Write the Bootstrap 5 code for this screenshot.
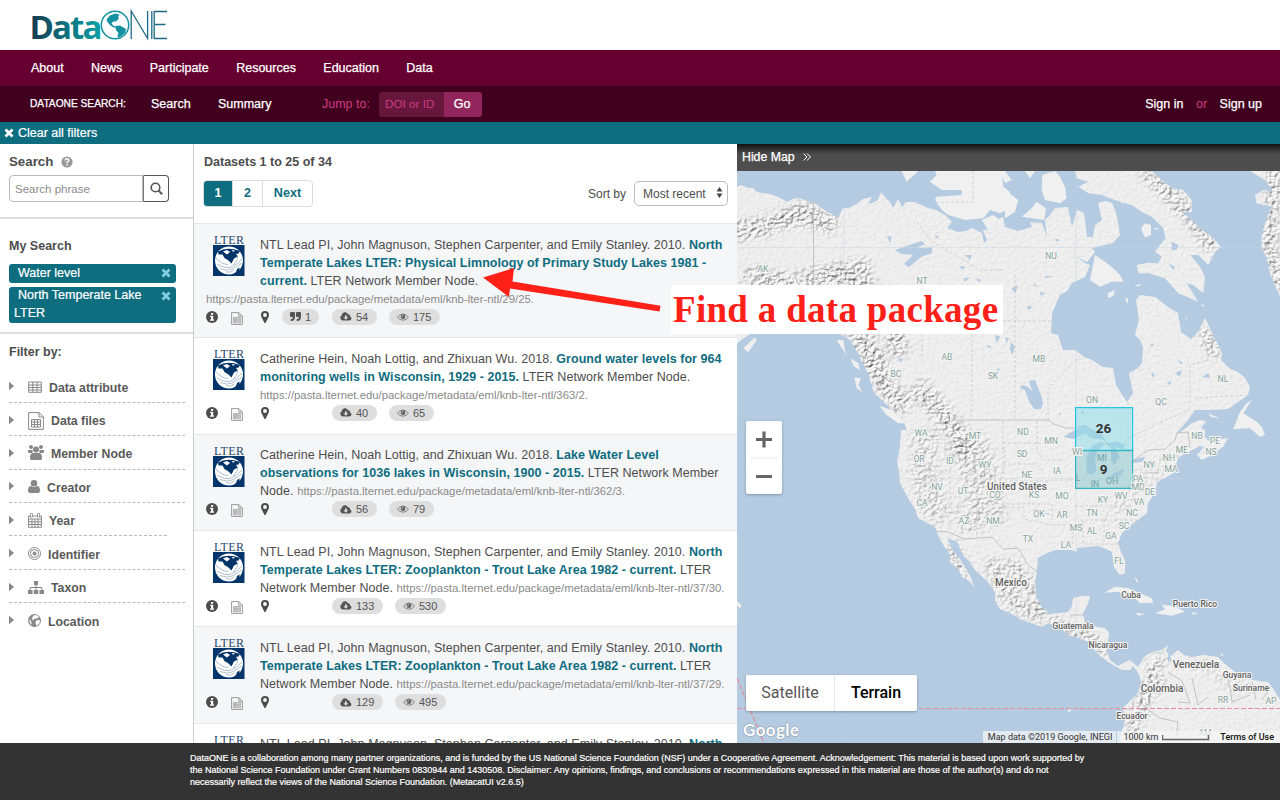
<!DOCTYPE html>
<html lang="en">
<head>
<meta charset="utf-8">
<meta name="viewport" content="width=device-width, initial-scale=1">
<title>DataONE Search</title>
<link href="https://cdn.jsdelivr.net/npm/bootstrap@5.3.0/dist/css/bootstrap.min.css" rel="stylesheet">
<style>
body{font-family:"Liberation Sans",Arial,sans-serif;font-size:12.5px;line-height:18px;color:#4d4d4d;height:800px;overflow:hidden;background:#fff}
a{text-decoration:none;color:inherit}
.site-head{height:50px;flex:none}
.bar-main{height:36px;background:#660030;color:#fff;padding:0 0 1px 31px;gap:27.4px;flex:none}
.bar-sub{height:36px;background:#40001e;color:#fff;padding:0 18px 0 30px;flex:none}
.bar-main,.bar-sub{font-size:12.5px;-webkit-text-stroke:.25px currentColor}
.bar-clear{height:22px;background:#0f6d80;color:#fff;padding-left:4px;flex:none;font-size:12.5px;-webkit-text-stroke:.2px #fff}
.pink{color:#d33b85;-webkit-text-stroke:0}
.doi{width:65px;height:25px;background:#66173b;border-radius:3px 0 0 3px;padding-left:6px;font-size:11.7px;line-height:24px}
.go{width:38px;height:25px;background:#91265d;border-radius:0 3px 3px 0;text-align:center;line-height:24px;padding-right:2px}
.main-area{height:599px;flex:none}
.side{width:194px;border-right:1.5px solid #ccc;flex:none}
.side h2,.res h2{font-size:12.5px;line-height:18px;font-weight:700;margin:0}
.side-sec{padding-left:9px;border-bottom:2px solid #ddd}
.phrase{width:134px;height:27px;border:1px solid #bbb;border-radius:4px 0 0 4px;font-size:11.5px;color:#8b8b8b;padding-left:5px;line-height:26px}
.lens{width:26px;height:27px;border:1px solid #555;border-left:1px solid #777;border-radius:0 4px 4px 0}
.pick{width:167px;background:#0f6d80;color:#fff;border-radius:3px;padding:0 2px 0 5px;font-size:12.5px;-webkit-text-stroke:.2px #fff}
.filt{width:176px;height:33.4px;border-bottom:1px dashed #bbb;font-weight:700;color:#5a5a5a;padding-top:4px;font-size:12.3px}
.filt>svg:first-child{margin-top:-3px}
.filt.end{border:0}
.res{width:543px;flex:none;overflow:hidden}
.pg{height:27px;border:1px solid #ddd;border-radius:4px;font-weight:700;color:#0f6d80;overflow:hidden;font-size:12.6px;line-height:25px;text-align:center;margin-left:-1px}
.pg span{border-right:1px solid #ddd;height:27px}
.sortbox{width:94px;height:25px;border:1px solid #bbb;border-radius:5px;font-size:12px;padding:0 4px 0 8px}
.item{height:96.4px;border-top:1px solid #e7e7e7;position:relative;padding-top:11.6px}
.item.odd{background:#f5f6f8}
.cite{padding-left:66px;white-space:nowrap;letter-spacing:.05px}
.cite div{height:18px}
.cite b{color:#0f6d80}
.url{color:#8a8a8a;font-size:11.35px;letter-spacing:0}
.lt{left:19px;top:11px}
.icons{height:19px;padding-left:12px;margin-top:-.3px}
.pill{height:16px;border-radius:8px;background:#dedede;font-size:11px;line-height:16px;color:#555;padding:0 8px;letter-spacing:0}
.map{width:543px;background:#b4cbe2;flex:none}
.hide-bar{height:27px;background:linear-gradient(#111,#4d4d4d 10px);color:#fff;padding:0 0 2px 5px;font-size:12.3px;-webkit-text-stroke:.25px #fff}
.zoomer{left:9px;top:277px;width:36px;height:73px;background:#fff;border-radius:2px;box-shadow:0 1px 3px #0004}
.maptype{left:9px;top:531px;width:171px;height:36px;background:#fff;border-radius:2px;box-shadow:0 1px 3px #0004;font:16px/36px Roboto,sans-serif;color:#565656}
.attr{right:0;bottom:0;height:12px;font:9px/12px Roboto,sans-serif;color:#333}
.attr span{background:#f5f5f5b8;height:12px}
.foot{height:57px;background:#333;color:#fff;font-size:9px;line-height:12px;padding:9px 0 0 190px;white-space:nowrap;flex:none;-webkit-text-stroke:.2px #fff}
.callout{left:671px;top:285px;width:332px;height:49px;background:#fff;color:#ff2018;font:700 37px/49px "Liberation Serif",serif;padding-left:2px;white-space:nowrap;letter-spacing:.3px}
svg{display:block;flex:none}
.st{font:8.6px Roboto,sans-serif;fill:#86a39b;stroke:#f4f4f4;stroke-width:2.2px;paint-order:stroke;text-anchor:middle}
.ct{font:500 8.5px Roboto,sans-serif;fill:#606060;stroke:#f4f4f4;stroke-width:2px;paint-order:stroke;text-anchor:middle}
.ct .big{font-size:10px}
</style>
</head>
<body class="d-flex flex-column">
<svg width="0" height="0" class="position-absolute">
<defs>
<symbol id="x" viewBox="0 0 10 10"><path d="M1.500 1.500l7 7M8.500 1.500l-7 7" stroke="currentColor" stroke-width="2.800"/></symbol>
<symbol id="info" viewBox="0 0 12 12"><circle cx="6" cy="6" r="6" fill="#4d4d4d"/><path d="M5 2h2.200v1.700H5zM4.200 4.800h3v3.600h.9v1.300H4.100V8.400h.9V6h-.8z" fill="#fff"/></symbol>
<symbol id="sheet" viewBox="0 0 12 13"><path d="M.6.6h7.200l3.600 3.600v8.200H.6zM7.800.6v3.600h3.600" fill="none" stroke="#999"/><path d="M2.500 5.500h7v5.300h-7z" fill="#d5d5d5"/><path d="M2.500 5.500h7v5.300h-7zM2.500 7.300h7M2.500 9h7M4.800 5.500v5.300" fill="none" stroke="#aaa" stroke-width=".8"/></symbol>
<symbol id="pin" viewBox="0 0 8 12"><path d="M4 0a4 4 0 0 1 4 4c0 1.500-.6 2.300-1.200 3.500L4.500 12h-1L1.200 7.500C.6 6.300 0 5.500 0 4a4 4 0 0 1 4-4zm0 2.100A1.900 1.900 0 1 0 4 5.900 1.900 1.900 0 0 0 4 2.100z" fill="#4d4d4d" fill-rule="evenodd"/></symbol>
<symbol id="quote" viewBox="0 0 11 9"><path d="M0 1q0-1 1-1h3q1 0 1 1v3.500Q5 9 1 9H.6V7.300H1Q2.700 7.300 2.900 5H1Q0 5 0 4zM6 1q0-1 1-1h3q1 0 1 1v3.500Q11 9 7 9h-.4V7.300H7q1.700 0 1.900-2.300H7Q6 5 6 4z" fill="#555"/></symbol>
<symbol id="cloud" viewBox="0 0 12 9"><path d="M3 8.500A2.800 2.800 0 0 1 1.700 3.300 3.300 3.300 0 0 1 8 2.200a1.900 1.900 0 0 1 2 2.200 2.100 2.100 0 0 1-.7 4.100z" fill="#555"/><path d="M5 3.300h1.700v2h1.500L5.850 7.700 3.500 5.300H5z" fill="#dedede"/></symbol>
<symbol id="eye" viewBox="0 0 12 8"><path d="M.6 4.200Q2.800 1 6 1t5.400 3.200Q9.200 7.200 6 7.200T.6 4.200z" fill="none" stroke="#777" stroke-width=".9"/><circle cx="6" cy="3.700" r="2.400" fill="#666"/><path d="M4.800 3.600Q5 2.500 6 2.400" stroke="#ddd" stroke-width=".6" fill="none"/></symbol>
<symbol id="lter" viewBox="0 0 32 41"><text x="16" y="9.300" text-anchor="middle" textLength="30" font-family="Liberation Serif,serif" font-size="12" fill="#28476d">LTER</text><path d="M0 10h31.500v31H0z" fill="#04356a"/><circle cx="16" cy="25.500" r="14" fill="#fff"/><path d="M5 16.500Q14 11.500 27 16L25.500 18.500 23 19 25 21.500 21 23.500 18.500 28.500 15.500 25.500 11.500 23 9.500 19.500 5.500 19.500Z" fill="#04356a"/><path d="M10 16.500l4-1.500 3 2-3 2.500zM19 15l3 .5-2 1.500z" fill="#fff"/><path d="M3 23q6 6.500 12 6.500M4 29q8 5 14 3T29 24M7 33.500q7 3 12 .5T29 28M24 21q2 4-4 9M13 37q5 1 8-2" fill="none" stroke="#8ca3bd" stroke-width=".7"/><path d="M26.500 32.500l-2.500 1.500-1 3-4.500 3.500 8-3z" fill="#04356a"/></symbol>
<symbol id="tri" viewBox="0 0 6 10"><path d="M0 0l6 5-6 5z" fill="#888"/></symbol>
</defs></svg>

<header class="site-head">
<svg width="200" height="50" viewBox="0 0 200 50" role="img" aria-label="DataONE">
<defs><linearGradient id="lg" x1="30" x2="104" y1="0" y2="0" gradientUnits="userSpaceOnUse"><stop stop-color="#17394e"/><stop offset=".5" stop-color="#0b7280"/><stop offset="1" stop-color="#0aa3a6"/></linearGradient></defs>
<text x="29.500" y="39.300" letter-spacing="-1.900" font-family="Open Sans,sans-serif" font-weight="700" font-size="33" fill="url(#lg)">Data</text>
<circle cx="115" cy="25" r="13.700" fill="#fff" stroke="#1391a0" stroke-width="1.500"/>
<path d="M106.500 19.500l3.500-4 5-2 4.500 1-1.500 2.500 1 1.500-3 3-2.500 0-2 1.500 1.500 2.500 2.500 1 .5 1.500-3.500-1-3-2.500-2-2.500zM115.500 26l4.500-.5 6 3.500-1 4-3.500 3-3.500 1.500-.5-2 1-2.500-2.500-3z" fill="#1391a0"/>
<path d="M131.200 39V11L147.600 38.500V11M151.800 11V39M154.200 11V39M154.200 11.500H167M155 24.500H165.500M154.200 38.500H167" fill="none" stroke="#1d6a86" stroke-width="1.300"/>
</svg>
</header>
<nav class="bar-main d-flex align-items-center"><a href="#">About</a><a href="#">News</a><a href="#">Participate</a><a href="#">Resources</a><a href="#">Education</a><a href="#">Data</a></nav>
<nav class="bar-sub d-flex align-items-center">
<span style="width:121px;font-size:10.200px">DATAONE SEARCH:</span><a href="#" style="width:67px">Search</a><a href="#" style="width:104px">Summary</a>
<span class="pink" style="width:57px">Jump to:</span><span class="doi pink">DOI or ID</span><span class="go">Go</span>
<a href="#" class="ms-auto">Sign in</a><span class="pink" style="margin:0 12.500px">or</span><a href="#">Sign up</a>
</nav>
<div class="bar-clear d-flex align-items-center"><svg width="10" height="10" class="me-1"><use href="#x"/></svg>Clear all filters</div>

<main class="main-area d-flex">
<aside class="side">
<section class="side-sec" style="height:74.500px;padding-top:9px">
<h2 class="d-flex align-items-center" style="font-size:13.300px">Search<svg class="ms-2" width="12" height="12" viewBox="0 0 12 12"><circle cx="6" cy="6" r="5.600" fill="#999"/><path d="M4.100 4.500Q4.200 2.800 6 2.800t1.900 1.600Q7.900 5.300 6 6.200V7M6 8v1.500" fill="none" stroke="#fff" stroke-width="1.500"/></svg></h2>
<div class="d-flex" style="margin-top:4px"><div class="phrase">Search phrase</div><div class="lens d-flex align-items-center justify-content-center"><svg width="13" height="13" viewBox="0 0 13 13"><circle cx="5.500" cy="5.500" r="4.300" fill="none" stroke="#555" stroke-width="1.600"/><path d="M8.600 8.600l3.600 3.600" stroke="#555" stroke-width="2"/></svg></div></div>
</section>
<section class="side-sec" style="height:115px;padding-top:18px">
<h2>My Search</h2>
<div class="pick d-flex align-items-center justify-content-between" style="height:19px;margin-top:9.500px;padding-bottom:2px"><span class="ps-1">Water level</span><svg width="10" height="10" style="color:#83cfdf;margin-right:3px"><use href="#x"/></svg></div>
<div class="pick d-flex justify-content-between" style="height:36px;margin-top:4px;line-height:17.500px"><span style="text-indent:4px">North Temperate Lake<br>LTER</span><svg width="10" height="10" style="color:#83cfdf;margin:4px 3px 0 0"><use href="#x"/></svg></div>
</section>
<section style="padding:9px 0 0 9px">
<h2>Filter by:</h2>
<div style="height:9px"></div>
<div class="filt d-flex align-items-center"><svg width="5" height="10"><use href="#tri"/></svg><svg style="margin:0 7px 2px 14px" width="14" height="12" viewBox="0 0 14 12"><path d="M.7 1h12.600v10.300H.7zM.7 4h12.600M.7 6.500h12.600M.7 9h12.600M4.800 1v10M9 1v10" fill="none" stroke="#888"/></svg>Data attribute</div>
<div class="filt d-flex align-items-center"><svg width="5" height="10"><use href="#tri"/></svg><svg style="margin:0 7px 0 14px" width="16" height="18" viewBox="0 0 16 18"><path d="M.6.600h10.400l4.400 4.400v12.400H.6zM11 .6v4.400h4.400M3.500 7.500h9v7.500h-9zM3.500 10h9M3.500 12.500h9M6.500 7.500v7.500M9.500 7.500v7.500" fill="none" stroke="#888"/></svg>Data files</div>
<div class="filt d-flex align-items-center"><svg width="5" height="10"><use href="#tri"/></svg><svg style="margin:0 7px 4px 14px" width="16" height="15" viewBox="0 0 16 15" fill="#888"><circle cx="8" cy="4.500" r="3"/><circle cx="3" cy="2" r="2"/><circle cx="13" cy="2" r="2"/><path d="M3 15q-1-.5-1-2 0-5 3-5h6q3 0 3 5 0 1.500-1 2zM0 5h4.500v3H1Q0 8 0 6zM16 5h-4.500v3H15q1 0 1-2z"/></svg>Member Node</div>
<div class="filt d-flex align-items-center"><svg width="5" height="10"><use href="#tri"/></svg><svg style="margin:0 7px 2px 14px" width="12" height="13" viewBox="0 0 12 13" fill="#888"><circle cx="6" cy="3.300" r="3.300"/><path d="M1.500 13Q0 12.500 0 10.500 0 6 3 6q3 2 6 0 3 0 3 4.500 0 2-1.500 2.500z"/></svg>Creator</div>
<div class="filt d-flex align-items-center" style="width:158px"><svg width="5" height="10"><use href="#tri"/></svg><svg style="margin:0 7px 2px 14px" width="14" height="15" viewBox="0 0 14 15"><path d="M.6 3h12.800v11.300H.6zM.6 6h12.800M.6 8.800h12.800M.6 11.500h12.800M4 6v8M7 6v8M10 6v8" fill="none" stroke="#888"/><path d="M2.500 .5h2v3.500h-2zM9.500 .5h2v3.500h-2z" fill="#fff" stroke="#888" stroke-width=".8"/></svg>Year</div>
<div class="filt d-flex align-items-center"><svg width="5" height="10"><use href="#tri"/></svg><svg style="margin:0 7px 2px 14px" width="13" height="13" viewBox="0 0 13 13" fill="none" stroke="#888"><circle cx="6.500" cy="6.500" r="6"/><circle cx="6.500" cy="6.500" r="4"/><circle cx="6.500" cy="6.500" r="1.600" fill="#888"/></svg>Identifier</div>
<div class="filt d-flex align-items-center"><svg width="5" height="10"><use href="#tri"/></svg><svg style="margin:0 7px 2px 14px" width="16" height="13" viewBox="0 0 16 13"><path d="M6 0h4v4H6zM0 9h4.500v4H0zM5.700 9h4.500v4H5.700zM11.500 9H16v4h-4.500z" fill="#888"/><path d="M8 4v5M2.200 9V6.500h11.600V9" fill="none" stroke="#888"/></svg>Taxon</div>
<div class="filt end d-flex align-items-center"><svg width="5" height="10"><use href="#tri"/></svg><svg style="margin:0 7px 2px 14px" width="13" height="13" viewBox="0 0 13 13"><circle cx="6.500" cy="6.500" r="6.500" fill="#888"/><path d="M5.500 1.500l3-.5 2.500 2-2 1.500-2.500 0-1 1.500-2-1zM8 6.500l4-.5-.5 3.500-3 2.500-1-3zM1 5l2 2 1 4-2-2z" fill="#fff"/></svg>Location</div>
</section>
</aside>

<section class="res">
<div style="height:79px;padding:9px 9px 0 10px">
<h2>Datasets 1 to 25 of 34</h2>
<div class="d-flex align-items-center" style="margin-top:9px">
<div class="pg d-flex"><span style="width:29px;background:#0f6d80;color:#fff">1</span><span style="width:30px">2</span><span class="border-0" style="width:49px">Next</span></div>
<span class="ms-auto" style="font-size:12px;margin-right:8px">Sort by</span><div class="sortbox d-flex align-items-center justify-content-between">Most recent<svg width="7" height="11" viewBox="0 0 7 11" style="margin-bottom:3px"><path d="M3.500 0L6.500 4.500H.5zM3.500 11L.5 6.500h6z" fill="#444"/></svg></div>
</div></div>

<article class="item odd" style="height:114.200px"><svg class="lt position-absolute" width="32" height="41"><use href="#lter"/></svg>
<div class="cite"><div>NTL Lead PI, John Magnuson, Stephen Carpenter, and Emily Stanley. 2010. <b>North</b></div><div><b>Temperate Lakes LTER: Physical Limnology of Primary Study Lakes 1981 -</b></div><div><b>current.</b> LTER Network Member Node.</div><div class="url" style="margin-left:-54px">https://pasta.lternet.edu/package/metadata/eml/knb-lter-ntl/29/25.</div></div>
<div class="icons d-flex align-items-center"><svg width="12" height="12"><use href="#info"/></svg><svg style="margin:3px 0 0 13px" width="12" height="13"><use href="#sheet"/></svg><svg style="margin:0 13px 0 18px" width="8" height="12"><use href="#pin"/></svg>
<span class="pill d-flex align-items-center" style="width:37px"><svg width="11" height="9" class="me-1"><use href="#quote"/></svg>1</span><span class="pill d-flex align-items-center" style="width:45px;margin-left:13px"><svg width="12" height="9" class="me-1"><use href="#cloud"/></svg>54</span><span class="pill d-flex align-items-center" style="width:51px;margin-left:12px"><svg width="12" height="8" class="me-1"><use href="#eye"/></svg>175</span></div></article>

<article class="item"><svg class="lt position-absolute" width="32" height="41"><use href="#lter"/></svg>
<div class="cite"><div>Catherine Hein, Noah Lottig, and Zhixuan Wu. 2018. <b>Ground water levels for 964</b></div><div><b>monitoring wells in Wisconsin, 1929 - 2015.</b> LTER Network Member Node.</div><div class="url">https://pasta.lternet.edu/package/metadata/eml/knb-lter-ntl/363/2.</div></div>
<div class="icons d-flex align-items-center"><svg width="12" height="12"><use href="#info"/></svg><svg style="margin:3px 0 0 13px" width="12" height="13"><use href="#sheet"/></svg><svg style="margin:0 63px 0 18px" width="8" height="12"><use href="#pin"/></svg>
<span class="pill d-flex align-items-center" style="width:45px"><svg width="12" height="9" class="me-1"><use href="#cloud"/></svg>40</span><span class="pill d-flex align-items-center" style="width:45px;margin-left:12px"><svg width="12" height="8" class="me-1"><use href="#eye"/></svg>65</span></div></article>

<article class="item odd"><svg class="lt position-absolute" width="32" height="41"><use href="#lter"/></svg>
<div class="cite"><div>Catherine Hein, Noah Lottig, and Zhixuan Wu. 2018. <b>Lake Water Level</b></div><div><b>observations for 1036 lakes in Wisconsin, 1900 - 2015.</b> LTER Network Member</div><div>Node. <span class="url">https://pasta.lternet.edu/package/metadata/eml/knb-lter-ntl/362/3.</span></div></div>
<div class="icons d-flex align-items-center"><svg width="12" height="12"><use href="#info"/></svg><svg style="margin:3px 0 0 13px" width="12" height="13"><use href="#sheet"/></svg><svg style="margin:0 63px 0 18px" width="8" height="12"><use href="#pin"/></svg>
<span class="pill d-flex align-items-center" style="width:45px"><svg width="12" height="9" class="me-1"><use href="#cloud"/></svg>56</span><span class="pill d-flex align-items-center" style="width:45px;margin-left:12px"><svg width="12" height="8" class="me-1"><use href="#eye"/></svg>79</span></div></article>

<article class="item"><svg class="lt position-absolute" width="32" height="41"><use href="#lter"/></svg>
<div class="cite"><div>NTL Lead PI, John Magnuson, Stephen Carpenter, and Emily Stanley. 2010. <b>North</b></div><div><b>Temperate Lakes LTER: Zooplankton - Trout Lake Area 1982 - current.</b> LTER</div><div>Network Member Node. <span class="url">https://pasta.lternet.edu/package/metadata/eml/knb-lter-ntl/37/30.</span></div></div>
<div class="icons d-flex align-items-center"><svg width="12" height="12"><use href="#info"/></svg><svg style="margin:3px 0 0 13px" width="12" height="13"><use href="#sheet"/></svg><svg style="margin:0 63px 0 18px" width="8" height="12"><use href="#pin"/></svg>
<span class="pill d-flex align-items-center" style="width:51px"><svg width="12" height="9" class="me-1"><use href="#cloud"/></svg>133</span><span class="pill d-flex align-items-center" style="width:51px;margin-left:12px"><svg width="12" height="8" class="me-1"><use href="#eye"/></svg>530</span></div></article>

<article class="item odd"><svg class="lt position-absolute" width="32" height="41"><use href="#lter"/></svg>
<div class="cite"><div>NTL Lead PI, John Magnuson, Stephen Carpenter, and Emily Stanley. 2010. <b>North</b></div><div><b>Temperate Lakes LTER: Zooplankton - Trout Lake Area 1982 - current.</b> LTER</div><div>Network Member Node. <span class="url">https://pasta.lternet.edu/package/metadata/eml/knb-lter-ntl/37/29.</span></div></div>
<div class="icons d-flex align-items-center"><svg width="12" height="12"><use href="#info"/></svg><svg style="margin:3px 0 0 13px" width="12" height="13"><use href="#sheet"/></svg><svg style="margin:0 63px 0 18px" width="8" height="12"><use href="#pin"/></svg>
<span class="pill d-flex align-items-center" style="width:51px"><svg width="12" height="9" class="me-1"><use href="#cloud"/></svg>129</span><span class="pill d-flex align-items-center" style="width:51px;margin-left:12px"><svg width="12" height="8" class="me-1"><use href="#eye"/></svg>495</span></div></article>

<article class="item"><svg class="lt position-absolute" width="32" height="41"><use href="#lter"/></svg>
<div class="cite"><div>NTL Lead PI, John Magnuson, Stephen Carpenter, and Emily Stanley. 2010. <b>North</b></div></div></article>
</section>

<section class="map position-relative">
<div class="hide-bar d-flex align-items-center">Hide Map<svg class="ms-2" width="8" height="8" viewBox="0 0 8 8"><path d="M.5.500L4 4 .5 7.500M4 .5L7.500 4 4 7.500" fill="none" stroke="#fff"/></svg></div>
<svg width="543" height="572" viewBox="737 171 543 572">
<defs>
<filter id="relief" x="0" y="0" width="100%" height="100%" color-interpolation-filters="sRGB"><feTurbulence type="fractalNoise" baseFrequency=".24 .3" numOctaves="3" seed="7"/><feDiffuseLighting surfaceScale="3.600" lighting-color="#fff"><feDistantLight azimuth="225" elevation="62"/></feDiffuseLighting><feColorMatrix type="matrix" values="1.050 0 0 0 0  1.050 0 0 0 0  1.050 0 0 0 0  0 0 0 0 1"/></filter>
<filter id="soft"><feGaussianBlur stdDeviation="5"/></filter>
<clipPath id="landclip"><use href="#mainland"/><use href="#baffin" transform="translate(1005 140) scale(.33333)"/><use href="#green" transform="translate(1005 140) scale(.33333)"/></clipPath>
<mask id="ranges" mask-type="alpha" style="mask-type:alpha" maskUnits="userSpaceOnUse" x="737" y="171" width="543" height="572"><rect x="737" y="171" width="543" height="572" fill-opacity=".05"/><g filter="url(#soft)" fill="none" stroke="#000" stroke-linejoin="round">
<path stroke-width="18" stroke-opacity=".65" d="M730 232L765 226 800 212 835 225M745 275L790 285 830 275 870 268M840 300L870 350 885 385 905 410M830 270L870 290 895 330 900 355M915 385L935 405 955 430 970 455"/>
<path stroke-width="26" stroke-opacity=".35" d="M850 340L880 370M925 430L925 470 930 500 945 520M955 440L975 470 980 500 965 530M975 440L990 490 990 525"/>
<path stroke-width="13" stroke-opacity=".6" d="M990 560L1010 600 1040 618M1035 580L1045 615M950 545L965 575M1010 560L1025 590"/>
<path stroke-width="10" stroke-opacity=".7" d="M1160 655L1150 680 1142 705 1130 735M1160 675L1145 700M1050 622L1090 640 1105 652"/>
<path stroke-width="12" stroke-opacity=".7" d="M1145 170L1175 200 1205 235 1215 250M1205 330L1215 355M1275 170L1270 250 1280 290"/>
<path stroke-width="12" stroke-opacity=".2" d="M1105 518L1130 495 1150 475 1175 455M1190 658L1240 690"/></g></mask>
<path id="mainland" d="M737 187L741 185 748 188 753 188 757 192 762 193 770 194 778 197 788 202 792 199 800 198 806 201 815 203 820 207 827 212 832 214 838 218 843 208 849 208 858 203 863 199 872 197 868 204 872 203 878 200 881 192 885 197 890 202 893 208 898 199 902 207 906 202 915 202 928 208 936 210 945 215 952 222 947 228 958 232 966 231 972 228 982 233 984 243 987 240 983 230 991 229 995 220 1003 217 1005 227 1018 231 1032 227 1030 222 1042 223 1047 237 1045 220 1050 215 1055 208 1068 207 1072 227 1077 210 1084 213 1085 220 1087 237 1093 237 1095 225 1102 220 1098 203 1106 201 1112 203 1115 210 1117 217 1120 235 1113 243 1105 245 1092 248 1095 252 1087 262 1077 257 1085 263 1090 265 1085 277 1072 283 1067 291 1060 295 1052 313 1051 333 1058 335 1063 350 1075 350 1084 357 1092 360 1103 367 1113 368 1116 385 1121 393 1127 402 1133 393 1129 373 1137 369 1142 363 1143 347 1140 340 1135 335 1139 320 1136 300 1140 295 1155 297 1168 307 1178 313 1181 332 1191 339 1198 332 1205 318 1209 326 1212 333 1217 343 1222 353 1221 360 1230 369 1238 372 1245 378 1250 387 1248 395 1238 402 1228 409 1210 410 1195 410 1188 420 1175 435 1182 431 1192 423 1200 420 1206 421 1201 428 1205 430 1205 437 1209 441 1228 438 1223 447 1210 456 1202 460 1197 455 1204 447 1200 446 1192 450 1184 454 1178 458 1175 468 1178 470 1165 478 1157 482 1155 493 1148 503 1147 513 1135 522 1129 527 1122 533 1118 543 1121 552 1125 560 1125 573 1120 575 1114 567 1112 552 1106 549 1098 546 1077 548 1077 552 1072 550 1055 550 1045 554 1038 558 1037 570 1035 583 1036 597 1042 608 1050 614 1060 613 1068 612 1072 606 1073 598 1082 596 1090 596 1088 604 1083 613 1085 623 1097 627 1105 628 1109 633 1107 652 1110 660 1118 666 1125 662 1130 660 1138 667 1144 657 1152 652 1162 650 1168 645 1166 651 1171 656 1178 650 1184 655 1192 657 1203 655 1218 657 1225 664 1235 672 1244 678 1252 680 1268 682 1274 690 1280 700V743H1119L1125 720 1123 708 1130 701 1138 693 1141 683 1140 677 1137 671 1133 666 1130 670 1122 670 1108 662 1097 653 1088 642 1080 638 1068 635 1060 627 1048 623 1042 627 1022 620 1010 613 1000 609 995 601 995 592 988 582 975 570 969 561 963 555 957 542 948 538 952 550 958 557 965 567 971 577 974 587 968 580 962 577 959 570 948 560 951 556 942 543 938 535 935 527 918 518 915 509 909 500 900 483 899 470 897 462 900 447 901 430 907 430 903 420 893 411 883 401 874 393 871 383 868 373 861 360 858 353 850 340 840 334 828 334 750 334 737 343Z"/>
<path id="baffin" d="M210 93H440L480 130 505 145 535 150 560 180 560 215 530 215 570 250 590 270 620 290 648 320 630 335 610 375 580 345 555 345 585 380 600 410 595 460 565 435 545 430 580 485 520 460 480 415 430 400 400 400 395 375 430 368 460 370 470 350 450 335 465 315 482 295 475 265 440 230 410 215 380 195 330 180 290 165 250 160 220 140 250 125 215 115Z"/>
<path id="green" d="M735 93H825V470L795 400 785 350 770 325 770 285 785 235 800 200 755 190 750 165 775 150 805 155 780 120Z"/>
</defs>
<g fill="#f0f0f0">
<use href="#mainland"/>
<g transform="translate(1005 140) scale(.33333)"><use href="#baffin"/><use href="#green"/><path d="M112 105L150 93 165 110 180 140 185 175 165 190 120 180 110 150ZM0 150L40 180 30 215 0 235ZM-15 93H0L20 120 0 130ZM50 230L80 205 95 185 123 205 118 240 80 235ZM60 93H90L75 115ZM270 345L300 365 325 385 345 405 355 425 320 425 285 440 255 420ZM308 460L330 450 325 468 310 475ZM360 475L370 475 368 492ZM408 265L420 250 438 255 438 285 420 293ZM740 780L715 820 755 845 770 860 780 885 765 890 735 865 685 868 705 815 725 790ZM608 820L645 835 620 832ZM620 895L650 900 640 905ZM390 435L412 432 400 440ZM345 180L370 185 350 190ZM445 265L462 265 455 270ZM590 490L600 500 590 498ZM540 530L548 538 542 538Z"/></g>
<g transform="translate(735 140) scale(.33333)"><path d="M600 93L605 105 585 125 620 150 680 150 680 165 605 170 600 180 620 210 640 225 690 240 745 235 765 210 795 220 825 205V155L805 140 800 93ZM500 93L515 125 550 93ZM740 240L775 225 800 245 760 270ZM433 797L475 812 512 850 490 850 455 825ZM358 712L378 715 370 735 383 757 365 745ZM25 625L60 592 65 600 40 637ZM305 600L325 600 332 640 345 652 330 640ZM345 655L370 670 375 690 358 680Z"/></g>
<g transform="translate(1005 470) scale(.33333)"><path d="M298 368L330 350 370 355 440 385 445 398 405 400 390 385 340 365ZM450 430L480 418 470 405 510 408 540 425 500 437ZM392 428L420 432 400 437ZM560 427L580 430 565 434ZM388 320L398 330 396 340ZM645 558L652 550 656 556ZM190 712L198 722 190 728Z"/></g>
<path d="M737 601l5 5-3 2-2-3z"/>
</g>
<g clip-path="url(#landclip)"><g mask="url(#ranges)"><rect x="737" y="171" width="543" height="572" filter="url(#relief)"/></g></g>
<g fill="#b4cbe2">
<g transform="translate(735 140) scale(.33333)"><path d="M480 330L515 318 560 303 570 312 545 325 592 322 590 340 560 350 548 360 520 382 508 370 535 345 500 342ZM455 288L470 290 465 310ZM690 345L710 345 705 360ZM670 380L690 378 685 388ZM685 415L705 412 690 425ZM725 415L740 420 728 425ZM780 585L795 590 785 610ZM490 655L505 658 498 668ZM755 615L770 620 760 625ZM785 690L795 682 790 700ZM600 285L612 290 602 295Z"/></g>
<g transform="translate(1005 140) scale(.33333)"><path d="M45 745L60 750 70 780 88 808 108 808 115 790 108 765 90 720 72 722 82 755 68 740 50 735ZM20 445L40 435 30 460ZM0 590L12 595 5 610ZM18 605L30 620 22 645 15 630ZM120 408L145 410 122 415ZM85 425L95 440 88 438ZM105 455L120 460 108 467ZM65 500L85 498 70 510ZM150 295L165 300 155 305ZM160 820L170 818 165 825ZM500 305L520 315 515 330 500 330ZM490 370L510 380 505 390ZM438 705L445 695 448 715ZM510 700L530 690 525 710ZM590 710L612 700 615 715ZM520 660L535 670 525 672ZM485 730L500 722 495 735ZM435 615L450 610 440 620ZM370 650L378 655 370 662ZM175 890L210 870 235 855 265 870 290 880 300 900 260 895 240 880 205 897ZM245 1000L245 950 262 915 290 905 300 912 275 935 270 960 275 990 262 1005ZM300 910L340 905 360 915 355 930 330 920 345 950 325 975 318 960 318 925ZM380 960L420 950 415 965 385 968ZM325 1000L360 985 350 1005 310 1020ZM225 815L238 812 235 825Z"/></g>
<path d="M1168 652l4 8-4 2zM1044 513h5v2zM1230 411l12-4-8 5z"/>
</g>
<g fill="none" stroke="#c9c9c9" stroke-width=".8">
<path stroke="#b8b8b8" d="M813.500 202V285M952 420H1048L1054 424 1066 428 1075 428 1085 425 1104 440 1114 448 1115 464M1130 463L1148 450 1165 449 1175 440 1177 433 1188 432 1190 448M935 531L948 532 965 539 992 537 1003 549 1018 548 1028 565 1038 572M1070 615H1084M1168 672L1182 681 1190 703 1178 702M1192 678L1198 705 1208 697M1145 708L1160 718 1178 722 1176 740M1230 685L1232 702 1250 695M1252 682L1256 700M1270 688L1262 700"/>
<path stroke-dasharray="3 2" d="M922 334V365M972 334V420M1003 321H1051M1015 275V418M1048 420V389L1080 356M1128 402V450M973 171V202H937M917 222L930 240 955 255 980 270H1003M1129 438L1165 420 1190 410M900 471H950V497H960V521M950 471V447M976 449H1005V465M1003 421V525M1003 443H1042M1003 464H1037L1045 474M1010 481H1050M1007 504H1052V520M1007 507H1024V519L1052 525M977 471V535M1037 421V450L1043 460H1063M1050 480H1073M1053 525H1072L1073 545M1083 520V547M1104 520V542M1085 544H1118M1075 506H1130M1080 520H1145M1130 485H1155M1130 470H1156M1190 403V365L1210 360M1195 398L1248 395"/>
<path stroke="#c4d4e5" stroke-opacity=".6" d="M737 247.500H1280M844 171V743M1076 171V743M737 478.500H1280"/>
<path stroke="#e78d98" stroke-dasharray="5 2" stroke-width="1.200" d="M737 708.500H1280M737 678L764 743"/></g>
<g fill="#91dfea" fill-opacity=".55" stroke="#24c6df" stroke-width="1.200"><path d="M1075.600 407.600h57v42.700h-57z"/><path d="M1075.600 450.600h57v37.800h-57z" fill="#8fcbd2" stroke="#35b4c3"/></g>
<g class="st"><text x="763" y="272">AK</text><text x="922" y="284">NT</text><text x="947" y="360">AB</text><text x="896" y="377">BC</text><text x="993" y="379">SK</text><text x="921" y="436">WA</text><text x="975" y="439">MT</text><text x="919" y="462">OR</text><text x="950" y="464">ID</text><text x="985" y="468">WY</text><text x="1051" y="259">NU</text><text x="1039" y="362">MB</text><text x="1092" y="403">ON</text><text x="1161" y="405">QC</text><text x="1223" y="382">NL</text><text x="1023" y="435">ND</text><text x="1022" y="457">SD</text><text x="1051" y="444">MN</text><text x="1077" y="455">WI</text><text x="1197" y="439">NB</text><text x="1215" y="444">PE</text><text x="1211" y="455">NS</text><text x="1182" y="453">ME</text><text x="1169" y="461">NH</text><text x="1149" y="468">NY</text><text x="1171" y="472">MA</text><text x="1057" y="474">IA</text><text x="1027" y="478">NE</text><text x="1138" y="482">PA</text><text x="1138" y="490">MD</text><text x="1150" y="495">DE</text><text x="1034" y="498">KS</text><text x="1062" y="499">MO</text><text x="1103" y="503">KY</text><text x="1121" y="499">WV</text><text x="1139" y="505">VA</text><text x="1039" y="517">OK</text><text x="1062" y="518">AR</text><text x="1092" y="516">TN</text><text x="1132" y="516">NC</text><text x="1076" y="531">MS</text><text x="1092" y="534">AL</text><text x="1111" y="539">GA</text><text x="1124" y="529">SC</text><text x="1028" y="542">TX</text><text x="1066" y="548">LA</text><text x="1119" y="564">FL</text><text x="937" y="490">NV</text><text x="963" y="494">UT</text><text x="995" y="498">CO</text><text x="922" y="506">CA</text><text x="964" y="524">AZ</text><text x="993" y="524">NM</text><text x="1223" y="703">RR</text><text x="1271" y="704">AP</text><text x="1205" y="736">AM</text>
<g stroke="none" fill="#6fa3a6"><text x="1102" y="461">MI</text><text x="1078" y="481">L</text><text x="1095" y="487">IN</text><text x="1112" y="484">OH</text></g></g>
<g class="ct"><text class="big" x="1017" y="490" textLength="60">United States</text><text class="big" x="1011" y="586" textLength="32">Mexico</text><text x="1131" y="598">Cuba</text><text x="1195" y="607">Puerto Rico</text><text x="1073" y="629">Guatemala</text><text x="1108" y="648">Nicaragua</text><text class="big" x="1196" y="668">Venezuela</text><text x="1237" y="678">Guyana</text><text class="big" x="1162" y="692">Colombia</text><text x="1251" y="691">Suriname</text><text x="1132" y="719">Ecuador</text></g>
<g font-family="Roboto,sans-serif" font-weight="700" font-size="13.500" fill="#333" text-anchor="middle"><text x="1103.500" y="433">26</text><text x="1103.500" y="474">9</text></g>
<text x="743" y="736" font-family="Lato,sans-serif" font-weight="700" font-size="17" textLength="56" fill="#fff" stroke="#8a9aab" stroke-width="1" paint-order="stroke">Google</text>
</svg>
<div class="zoomer position-absolute"><svg width="36" height="73"><path d="M10 18.500h16M18 10.500v16M10 55.500h16" stroke="#666" stroke-width="3.200"/><path d="M5 37h27" stroke="#e6e6e6"/></svg></div>
<div class="maptype position-absolute d-flex text-center"><span style="width:89px;border-right:1px solid #e8e8e8">Satellite</span><span class="flex-fill" style="color:#000;font-weight:500">Terrain</span></div>
<div class="attr position-absolute d-flex"><span style="padding:0 4px 0 5px;margin-right:1px">Map data ©2019 Google, INEGI</span><span class="d-flex" style="padding:0 10px 0 6px">1000 km<svg width="48" height="12" style="margin-left:4px"><path d="M.5 4v4.500h46V4" fill="none" stroke="#666" stroke-width="1.500"/></svg></span><span style="padding-right:6px;color:#111;font-weight:500">Terms of Use</span></div>
</section>
</main>
<footer class="foot">DataONE is a collaboration among many partner organizations, and is funded by the US National Science Foundation (NSF) under a Cooperative Agreement. Acknowledgement: This material is based upon work supported by<br>the National Science Foundation under Grant Numbers 0830944 and 1430508. Disclaimer: Any opinions, findings, and conclusions or recommendations expressed in this material are those of the author(s) and do not<br>necessarily reflect the views of the National Science Foundation. (MetacatUI v2.6.5)</footer>

<svg class="position-absolute" style="left:480px;top:264px" width="184" height="50"><path d="M180.500 41.800L179.500 47.600 30 24.500 29 33 3 13.500 34 4 32.500 17.500z" fill="#ff2018"/></svg>
<div class="callout position-absolute">Find a data package</div>
<script src="https://cdn.jsdelivr.net/npm/bootstrap@5.3.0/dist/js/bootstrap.bundle.min.js"></script>
</body>
</html>
